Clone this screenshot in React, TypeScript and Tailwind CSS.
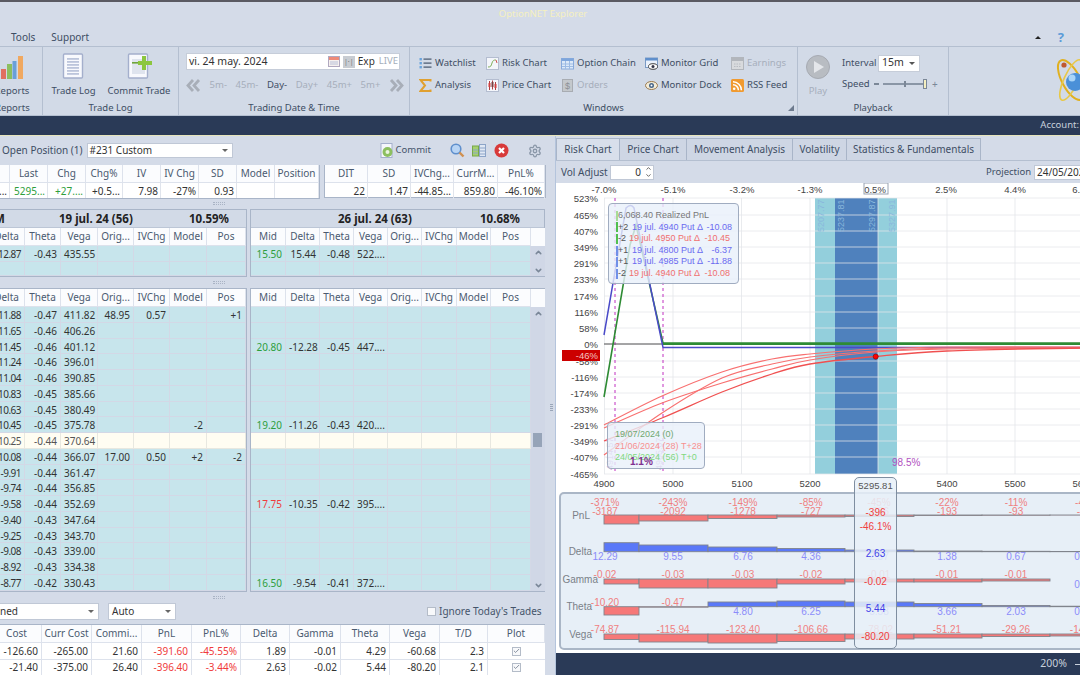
import React from "react";
import { Settings, ChevronUp, ChevronDown, Check } from "lucide-react";

const LEFT_COLS = "grid grid-cols-[36px_36px_37px_36px_36px_37px_39px]";
const RIGHT_COLS = "grid grid-cols-[35px_34px_34px_34px_34px_35px_34px_40px]";
const TOP1_COLS = "grid grid-cols-[38px_38px_38px_37px_38px_38px_38px_38px_44px]";
const TOP2_COLS = "grid grid-cols-[43px_43px_43px_44px_47px]";
const BOT_COLS = "grid grid-cols-[50px_50px_50px_50px_49px_49px_51px_49px_50px_48px_57px]";

const HL = ["Delta", "Theta", "Vega", "Orig...", "IVChg", "Model", "Pos"];
const HR = ["Mid", "Delta", "Theta", "Vega", "Orig...", "IVChg", "Model", "Pos"];

type R = { l: string[]; mid?: string; c?: string; r?: string[]; hi?: boolean };
const rows: R[] = [
  { l: ["-11.88", "-0.47", "411.82", "48.95", "0.57", "", "+1"] },
  { l: ["-11.65", "-0.46", "406.26"] },
  { l: ["-11.45", "-0.46", "401.12"], mid: "20.80", c: "g", r: ["-12.28", "-0.45", "447...."] },
  { l: ["-11.24", "-0.46", "396.01"] },
  { l: ["-11.04", "-0.46", "390.85"] },
  { l: ["-10.83", "-0.45", "385.66"] },
  { l: ["-10.63", "-0.45", "380.49"] },
  { l: ["-10.45", "-0.45", "375.78", "", "", "-2", ""], mid: "19.20", c: "g", r: ["-11.26", "-0.43", "420...."] },
  { l: ["-10.25", "-0.44", "370.64"], hi: true },
  { l: ["-10.08", "-0.44", "366.07", "17.00", "0.50", "+2", "-2"] },
  { l: ["-9.91", "-0.44", "361.47"] },
  { l: ["-9.74", "-0.44", "356.85"] },
  { l: ["-9.58", "-0.44", "352.69"], mid: "17.75", c: "r", r: ["-10.35", "-0.42", "395...."] },
  { l: ["-9.40", "-0.43", "347.64"] },
  { l: ["-9.25", "-0.43", "343.70"] },
  { l: ["-9.08", "-0.43", "339.00"] },
  { l: ["-8.92", "-0.43", "334.38"] },
  { l: ["-8.77", "-0.42", "330.43"], mid: "16.50", c: "g", r: ["-9.54", "-0.41", "372...."] },
];

function H({ t, last }: { t: string; last?: boolean }) {
  return (
    <div className={"h-full bg-[#fbfcfe] text-center text-[#4a5a70] leading-[17px] whitespace-nowrap overflow-hidden border-b border-[#dde2ec] " + (last ? "" : "border-r")}>
      {t}
    </div>
  );
}

function C({ t, color, hi, tight }: { t?: string; color?: string; hi?: boolean; tight?: boolean }) {
  const col = color === "g" ? "text-[#2e9e3c]" : color === "r" ? "text-[#f03c3c]" : hi ? "text-[#555]" : "text-[#333]";
  return (
    <div className={"border-r border-b px-[3px] text-right whitespace-nowrap overflow-hidden " + (tight ? "tracking-[-0.5px] " : "") + (hi ? "bg-[#fffdf2] border-[#e8e8e0] " : "bg-[#c7e5ec] border-[#d3d8e6] ") + col}>
      {t || ""}
    </div>
  );
}

function Grip() {
  return (
    <div className="flex h-[11px] items-center pl-[213px]">
      <div className="h-[3px] w-[12px] border-y border-dotted border-[#a9b3c4]" />
    </div>
  );
}

function Scrollbar({ thumb }: { thumb?: boolean }) {
  return (
    <div className="relative flex w-[14px] flex-col items-center justify-between self-stretch bg-[#d0d7e6] pt-[1px] text-[#7a8798]">
      <ChevronUp size={9} strokeWidth={4} className="mt-[1px]" />
      {thumb && <div className="absolute left-[2px] top-[126px] h-[14px] w-[9px] bg-[#96a4b8]" />}
      <ChevronDown size={9} strokeWidth={4} className="mb-[1px]" />
    </div>
  );
}

function Doc({ plus }: { plus?: boolean }) {
  return (
    <svg width="26" height="26" viewBox="0 0 26 26">
      <rect x="2.5" y="1" width="19" height="24" fill="#f8f9fd" stroke="#a4afcc" strokeWidth="1.4" rx="1" />
      {plus ? (
        <g>
          <rect x="6" y="6" width="13" height="15" fill="#dfe4ee" />
          <rect x="6" y="9" width="10" height="1.6" fill="#6fa53c" />
          <path d="M18 3v14M12 10h14" stroke="#8cc63f" strokeWidth="4" />
        </g>
      ) : (
        <g fill="#bcc5db">
          {[5, 8, 11, 14, 17, 20].map((y) => (
            <rect key={y} x="6" y={y} width="12" height="1.8" />
          ))}
        </g>
      )}
    </svg>
  );
}

function Ico({ k }: { k: string }) {
  const p = { width: 13, height: 13, viewBox: "0 0 13 13", className: "shrink-0" };
  switch (k) {
    case "watch":
      return (
        <svg {...p}>
          {[2, 6, 10].map((y) => (
            <g key={y}>
              <rect x="0.5" y={y - 1} width="2.4" height="2.4" fill="#6aa3dc" />
              <rect x="4.5" y={y - 0.5} width="8" height="1.2" fill="#44546c" />
            </g>
          ))}
        </svg>
      );
    case "sigma":
      return (
        <svg {...p}>
          <path d="M11.5 2.5V1H1.5l4.5 5.5L1.5 12h10v-1.5" fill="none" stroke="#e0a030" strokeWidth="2" />
        </svg>
      );
    case "risk":
      return (
        <svg {...p}>
          <rect x="0.5" y="0.5" width="12" height="12" fill="#f4f6fb" stroke="#b4bdd0" />
          <path d="M2 10c3 0 3-1 4-4s2-3 4-3" fill="none" stroke="#7fae5a" />
          <path d="M10 3l1 3" stroke="#d05050" />
        </svg>
      );
    case "price":
      return (
        <svg {...p}>
          <rect x="0.5" y="0.5" width="12" height="12" fill="#f4f6fb" stroke="#b4bdd0" />
          <path d="M3.5 2v9M6.5 1.5v9M9.5 3v8" stroke="#b04040" />
          <rect x="2.5" y="4" width="2" height="4" fill="#d04040" />
          <rect x="5.5" y="3" width="2" height="5" fill="#7a4040" />
          <rect x="8.5" y="5" width="2" height="4" fill="#d04040" />
        </svg>
      );
    case "chain":
      return (
        <svg {...p}>
          <rect x="0.5" y="1.5" width="12" height="10.5" fill="#dce9f8" stroke="#88aadc" />
          <rect x="0.5" y="1.5" width="12" height="2.5" fill="#7ea6dc" />
          <path d="M4.5 4v8M8.5 4v8M1 7h11M1 9.5h11" stroke="#9dbbe4" />
        </svg>
      );
    case "mgrid":
      return (
        <svg {...p}>
          <rect x="0.5" y="1" width="12" height="9.5" fill="#eaf1fb" stroke="#7a9ac4" />
          <rect x="0.5" y="1" width="12" height="2.5" fill="#5f8fcc" />
          <ellipse cx="8" cy="9.5" rx="4.5" ry="2.8" fill="#fff" stroke="#444" />
          <circle cx="8" cy="9.5" r="1.5" fill="#334" />
        </svg>
      );
    case "mdock":
      return (
        <svg {...p}>
          <ellipse cx="6.5" cy="6.5" rx="6" ry="4" fill="#f3ecd8" stroke="#9a7a50" />
          <circle cx="6.5" cy="6.5" r="2.5" fill="#47668a" />
          <circle cx="6.5" cy="6.5" r="1" fill="#fff" />
        </svg>
      );
    case "earn":
      return (
        <svg {...p}>
          <rect x="0.5" y="0.5" width="12" height="12" fill="#d8dadd" stroke="#b2b6bc" />
          <rect x="1" y="1" width="11" height="3" fill="#b2b6bc" />
          <path d="M3 7h7M3 9.5h7" stroke="#b8bcc2" strokeDasharray="1.5 1" />
        </svg>
      );
    case "orders":
      return (
        <svg {...p}>
          <rect x="1.5" y="0.5" width="10" height="12" fill="#c4c8cc" stroke="#a8acb2" />
          <text x="6.5" y="10" textAnchor="middle" fontSize="9" fill="#8c9096" className="font-['Liberation_Sans',sans-serif]">$</text>
        </svg>
      );
    case "rss":
      return (
        <svg {...p}>
          <rect x="0" y="0" width="13" height="13" rx="1.5" fill="#f09a30" />
          <circle cx="3.2" cy="9.8" r="1.3" fill="#fff" />
          <path d="M2 5.8a5.4 5.4 0 0 1 5.4 5.4M2 2.8a8.4 8.4 0 0 1 8.4 8.4" fill="none" stroke="#fff" strokeWidth="1.5" />
        </svg>
      );
  }
  return null;
}

function WinItem({ k, t, off }: { k: string; t: string; off?: boolean }) {
  return (
    <div className={"flex h-[22px] items-center gap-[3px] whitespace-nowrap " + (off ? "text-[#a6aebb]" : "text-[#3e4e64]")}>
      <Ico k={k} />
      <span>{t}</span>
    </div>
  );
}

function GroupLabel({ t }: { t: string }) {
  return <div className="absolute bottom-0 left-0 right-0 text-center leading-[14px] text-[#3e4e64]">{t}</div>;
}

function Ribbon() {
  return (
    <div className="flex h-[70px] border-y border-[#b4bfd0] bg-[#d2dae7] text-[9.5px]">
      <div className="relative h-full w-[43px] shrink-0 overflow-hidden border-r border-[#b4bfd0]">
        <div className="-ml-[18px] flex w-[60px] flex-col items-center pt-[8px] text-[#3e4e64]">
          <svg width="24" height="24" viewBox="0 0 24 24">
            <rect x="1" y="14" width="5" height="10" fill="#e07060" />
            <rect x="7" y="9" width="5" height="15" fill="#8cbf60" />
            <rect x="12.5" y="6" width="4" height="18" fill="#6aa0d8" />
            <rect x="18" y="1" width="5" height="23" fill="#f0a860" />
          </svg>
          <span className="mt-[5px] leading-[14px]">Reports</span>
        </div>
        <div className="absolute bottom-0 -left-[5px] w-[60px] leading-[14px] text-[#3e4e64]">Reports</div>
      </div>

      <div className="relative h-full w-[136px] shrink-0 border-r border-[#b4bfd0]">
        <div className="flex gap-[10px] pl-[7px] pt-[6px] text-[#3e4e64]">
          <div className="flex w-[47px] flex-col items-center">
            <Doc />
            <span className="mt-[5px] leading-[14px] whitespace-nowrap">Trade Log</span>
          </div>
          <div className="flex w-[64px] flex-col items-center">
            <Doc plus />
            <span className="mt-[5px] leading-[14px] whitespace-nowrap">Commit Trade</span>
          </div>
        </div>
        <GroupLabel t="Trade Log" />
      </div>

      <div className="relative h-full w-[231px] shrink-0 border-r border-[#b4bfd0] pl-[7px] pt-[6px]">
        <div className="flex h-[17px] w-[214px] items-center border border-[#c6cdd9] bg-white pl-[2px] pr-[1px] text-[#333]">
          <span className="text-[10.5px]">vi. 24 may. 2024</span>
          <svg width="12" height="11" viewBox="0 0 12 11" className="ml-auto">
            <rect x="0.5" y="0.5" width="11" height="10" fill="#f6f0ee" stroke="#b0a8c0" />
            <rect x="1" y="1" width="10" height="3" fill="#ee8a78" />
            <path d="M2 6h8M2 8h8" stroke="#b8c0d8" />
          </svg>
          <div className="ml-[3px] flex h-[12px] w-[12px] items-center justify-center bg-[#c8ccd2] text-[7px] leading-none text-[#777]">|·|</div>
          <span className="ml-[2px] w-[19px] text-center text-[10px]">Exp</span>
          <span className="ml-[3px] text-[#a4aeba]">LIVE</span>
        </div>
        <div className="mt-[7px] flex h-[16px] w-[218px] items-center justify-between leading-[16px] text-[#a6aebb]">
          <svg width="15" height="13" viewBox="0 0 15 13">
            <path d="M7 1L2 6.5 7 12M13 1L8 6.5 13 12" fill="none" stroke="#a8aeb8" strokeWidth="2.8" />
          </svg>
          <span>5m-</span>
          <span>45m-</span>
          <span className="text-[#3e4e64]">Day-</span>
          <span>Day+</span>
          <span>45m+</span>
          <span>5m+</span>
          <svg width="15" height="13" viewBox="0 0 15 13">
            <path d="M2 1l5 5.5L2 12M8 1l5 5.5L8 12" fill="none" stroke="#a8aeb8" strokeWidth="2.8" />
          </svg>
        </div>
        <GroupLabel t="Trading Date & Time" />
      </div>

      <div className="relative h-full w-[388px] shrink-0 border-r border-[#b4bfd0]">
        <div className="grid grid-cols-[67px_75px_84px_86px_60px] pl-[9px] pt-[5px]">
          <WinItem k="watch" t="Watchlist" />
          <WinItem k="risk" t="Risk Chart" />
          <WinItem k="chain" t="Option Chain" />
          <WinItem k="mgrid" t="Monitor Grid" />
          <WinItem k="earn" t="Earnings" off />
          <WinItem k="sigma" t="Analysis" />
          <WinItem k="price" t="Price Chart" />
          <WinItem k="orders" t="Orders" off />
          <WinItem k="mdock" t="Monitor Dock" />
          <WinItem k="rss" t="RSS Feed" />
        </div>
        <GroupLabel t="Windows" />
        <svg width="6" height="6" viewBox="0 0 6 6" className="absolute bottom-[4px] right-[3px]">
          <path d="M6 0v6H0z" fill="#6d7a8e" />
        </svg>
      </div>

      <div className="relative flex h-full w-[151px] shrink-0 border-r border-[#b4bfd0] pl-[8px] pt-[8px] text-[#3e4e64]">
        <div className="flex w-[24px] flex-col items-center">
          <svg width="24" height="24" viewBox="0 0 24 24">
            <circle cx="12" cy="12" r="11.5" fill="#b8bcc2" stroke="#a6aab2" />
            <path d="M8 6v12l10-6z" fill="#e4e6ea" />
          </svg>
          <span className="mt-[5px] leading-[14px] text-[#a6aebb]">Play</span>
        </div>
        <div className="ml-[12px]">
          <div className="-mt-[1px] flex h-[18px] items-center">
            <span className="w-[36px]">Interval</span>
            <div className="relative flex h-[17px] w-[42px] items-center border border-[#c6cdd9] bg-white pl-[3px] text-[10.5px] text-[#333]">
              15m
              <span className="absolute right-[4px] top-[6px] h-0 w-0 border-x-[3px] border-t-[3px] border-x-transparent border-t-[#555]" />
            </div>
          </div>
          <div className="mt-[4px] flex h-[16px] items-center">
            <span className="w-[32px]">Speed</span>
            <span className="h-[2px] w-[5px] bg-[#7b8797]" />
            <div className="relative ml-[4px] h-[2px] w-[41px] bg-[#8a96a6]">
              <span className="absolute left-[21px] -top-[2px] h-[6px] w-[2px] bg-[#7b8797]" />
              <span className="absolute -right-[3px] -top-[4px] h-[10px] w-[4px] border border-[#7b8797] bg-[#f5efc0]" />
            </div>
            <span className="ml-[8px] text-[10px] leading-none text-[#7b8797]">+</span>
          </div>
        </div>
        <GroupLabel t="Playback" />
      </div>

      <div className="relative flex h-full flex-1 justify-end overflow-hidden pt-[10px]">
        <svg width="31" height="46" viewBox="0 0 31 46" className="shrink-0">
          <ellipse cx="22" cy="23" rx="9" ry="22" fill="none" stroke="#e0b020" strokeWidth="2" transform="rotate(-28 22 23)" />
          <ellipse cx="22" cy="23" rx="7" ry="22" fill="none" stroke="#e8c848" strokeWidth="1.6" transform="rotate(25 22 23)" />
          <circle cx="26" cy="25" r="9" fill="#4a90d8" />
          <circle cx="23" cy="21" r="3.5" fill="#a8d4f8" />
          <circle cx="15" cy="8" r="2.6" fill="#c05a30" />
        </svg>
      </div>
    </div>
  );
}

function ToolIcons() {
  return (
    <>
      <div className="flex items-center gap-[1px] text-[9.5px] text-[#44546a]">
        <svg width="15" height="15" viewBox="0 0 15 15">
          <rect x="1" y="0.5" width="11" height="14" fill="#f4f6fb" stroke="#a4afcc" />
          <circle cx="7.5" cy="9" r="5" fill="#8cbf60" />
          <circle cx="7.5" cy="9" r="2" fill="#eaf4e0" />
        </svg>
        <span>Commit</span>
      </div>
      <svg width="15" height="15" viewBox="0 0 15 15" className="ml-[19px]">
        <circle cx="6" cy="6" r="4.8" fill="#b8d4f4" stroke="#5f8fcc" strokeWidth="1.6" />
        <path d="M9.5 9.5l4 4" stroke="#d09050" strokeWidth="2.4" />
      </svg>
      <svg width="14" height="13" viewBox="0 0 14 13" className="ml-[7px]">
        <rect x="0.5" y="2" width="6" height="10" fill="#a4d070" stroke="#78a848" />
        <rect x="7.5" y="0.5" width="6" height="12" fill="#e0e8f4" stroke="#8ca4c8" />
        <path d="M8 4h5M8 7h5M8 10h5M1 6h5M1 9h5" stroke="#8ca4c8" />
      </svg>
      <svg width="15" height="15" viewBox="0 0 15 15" className="ml-[8px]">
        <circle cx="7.5" cy="7.5" r="7" fill="#d83a3a" />
        <path d="M5 5l5 5M10 5l-5 5" stroke="#fff" strokeWidth="2.2" />
      </svg>
      <Settings size={14} strokeWidth={2.2} className="ml-[19px] text-[#8a97a8]" />
    </>
  );
}

function Left() {
  return (
    <div className="flex w-[548px] shrink-0 flex-col overflow-hidden">
      <div className="flex h-[29px] items-center">
        <span className="pl-[2px] text-[#3e4e64] whitespace-nowrap">Open Position (1)</span>
        <div className="relative ml-[4px] flex h-[15px] w-[146px] items-center border border-[#c0c8d6] bg-white pl-[2px] text-[#333]">
          #231 Custom
          <span className="absolute right-[4px] top-[5px] h-0 w-0 border-x-[3px] border-t-[3px] border-x-transparent border-t-[#666]" />
        </div>
        <div className="ml-[147px] flex items-center">
          <ToolIcons />
        </div>
      </div>

      <div className="flex h-[33px] items-start gap-[4px]">
        <div className="-ml-[28px] border-r border-b border-[#a9b5c8]">
          <div className={TOP1_COLS + " h-[18px]"}>
            {["", "Last", "Chg", "Chg%", "IV", "IV Chg", "SD", "Model", "Position"].map((t, i) => (
              <H key={i} t={t} />
            ))}
          </div>
          <div className={TOP1_COLS + " h-[15px] bg-white leading-[16px] text-[#333]"}>
            {[["...", ""], ["5295...", "text-[#2e9e3c]"], ["+27....", "text-[#2e9e3c]"], ["+0.5...", ""], ["7.98", ""], ["-27%", ""], ["0.93", ""], ["", ""], ["", ""]].map(([t, c], i) => (
              <div key={i} className={"border-r border-[#e0e4ec] px-[2px] text-right whitespace-nowrap overflow-hidden " + c}>{t}</div>
            ))}
          </div>
        </div>
        <div className="border border-t-0 border-[#a9b5c8]">
          <div className={TOP2_COLS + " h-[18px]"}>
            {["DIT", "SD", "IVChg...", "CurrM...", "PnL%"].map((t, i) => (
              <H key={i} t={t} />
            ))}
          </div>
          <div className={TOP2_COLS + " h-[14px] bg-white leading-[16px] text-[#333]"}>
            {["22", "1.47", "-44.85...", "859.80", "-46.10%"].map((t, i) => (
              <div key={i} className="border-r border-[#e0e4ec] px-[2px] text-right whitespace-nowrap">{t}</div>
            ))}
          </div>
        </div>
      </div>

      <Grip />

      <div className="flex h-[68px]">
        <div className="-ml-[11px] w-[258px] shrink-0 border border-l-0 border-[#a9b5c8]">
          <div className="flex h-[18px] items-center border-b border-[#bcc6d6] bg-[#d2dae7] text-[11.5px] font-bold text-[#222] whitespace-nowrap">
            <span className="w-[20px] overflow-hidden pl-[5px]">M</span>
            <span className="ml-[50px] w-[130px]">19 jul. 24 (56)</span>
            <span>10.59%</span>
          </div>
          <div className={LEFT_COLS + " h-[18px]"}>
            {HL.map((t) => (
              <H key={t} t={t} />
            ))}
          </div>
          <div className={LEFT_COLS + " h-[16px] leading-[16px]"}>
            {["-12.87", "-0.43", "435.55", "", "", "", ""].map((t, i) => (
              <C key={i} t={t} tight={i === 0} />
            ))}
          </div>
          <div className={LEFT_COLS + " h-[14px]"}>
            {[0, 1, 2, 3, 4, 5, 6].map((i) => (
              <C key={i} />
            ))}
          </div>
        </div>
        <div className="ml-[3px] w-[295px] shrink-0 border border-[#a9b5c8]">
          <div className="flex h-[18px] items-center border-b border-[#bcc6d6] bg-[#d2dae7] text-[11.5px] font-bold text-[#222] whitespace-nowrap">
            <span className="ml-[87px] w-[142px]">26 jul. 24 (63)</span>
            <span>10.68%</span>
          </div>
          <div className="flex h-[48px]">
            <div>
              <div className={RIGHT_COLS + " h-[18px]"}>
                {HR.map((t) => (
                  <H key={t} t={t} />
                ))}
              </div>
              <div className={RIGHT_COLS + " h-[16px] leading-[16px]"}>
                {["15.50", "15.44", "-0.48", "522....", "", "", "", ""].map((t, i) => (
                  <C key={i} t={t} color={i === 0 ? "g" : undefined} />
                ))}
              </div>
              <div className={RIGHT_COLS + " h-[14px]"}>
                {[0, 1, 2, 3, 4, 5, 6, 7].map((i) => (
                  <C key={i} />
                ))}
              </div>
            </div>
            <div className="flex flex-col">
              <div className="h-[18px] w-[14px] bg-[#fbfcfe]" />
              <div className="flex flex-1">
                <Scrollbar />
              </div>
            </div>
          </div>
        </div>
      </div>

      <Grip />

      <div className="flex h-[304px]">
        <div className="-ml-[11px] w-[258px] shrink-0 border border-l-0 border-[#a9b5c8]">
          <div className={LEFT_COLS + " h-[18px]"}>
            {HL.map((t) => (
              <H key={t} t={t} />
            ))}
          </div>
          {rows.map((r, i) => (
            <div key={i} className={LEFT_COLS + " h-[15.75px] leading-[16px]"}>
              {[0, 1, 2, 3, 4, 5, 6].map((j) => (
                <C key={j} t={r.l[j]} hi={r.hi} tight={j === 0} />
              ))}
            </div>
          ))}
        </div>
        <div className="ml-[3px] flex w-[295px] shrink-0 border border-[#a9b5c8]">
          <div>
            <div className={RIGHT_COLS + " h-[18px]"}>
              {HR.map((t) => (
                <H key={t} t={t} />
              ))}
            </div>
            {rows.map((r, i) => (
              <div key={i} className={RIGHT_COLS + " h-[15.75px] leading-[16px]"}>
                {[0, 1, 2, 3, 4, 5, 6, 7].map((j) => (
                  <C key={j} hi={r.hi} t={j === 0 ? r.mid : r.r ? r.r[j - 1] : ""} color={j === 0 ? r.c : undefined} />
                ))}
              </div>
            ))}
          </div>
          <div className="flex flex-col">
            <div className="h-[18px] w-[14px] bg-[#fbfcfe]" />
            <div className="flex flex-1">
              <Scrollbar thumb />
            </div>
          </div>
        </div>
      </div>

      <Grip />

      <div className="flex h-[21px] items-start text-[#333]">
        <div className="relative -ml-[40px] flex h-[17px] w-[139px] items-center justify-end border border-[#c0c8d6] bg-white pr-[80px]">
          Combined
          <span className="absolute right-[4px] top-[6px] h-0 w-0 border-x-[3px] border-t-[3px] border-x-transparent border-t-[#666]" />
        </div>
        <div className="relative ml-[9px] flex h-[17px] w-[68px] items-center border border-[#c0c8d6] bg-white pl-[3px]">
          Auto
          <span className="absolute right-[4px] top-[6px] h-0 w-0 border-x-[3px] border-t-[3px] border-x-transparent border-t-[#666]" />
        </div>
        <div className="ml-[251px] flex h-[17px] items-center whitespace-nowrap text-[#44546a]">
          <span className="h-[9px] w-[9px] border border-[#b4bcc8] bg-[#f8f9fb]" />
          <span className="ml-[3px]">Ignore Today's Trades</span>
        </div>
      </div>

      <div className="-ml-[8px] w-[553px] border-t border-[#a9b5c8]">
        <div className={BOT_COLS + " h-[18px]"}>
          {["Cost", "Curr Cost", "Commi...", "PnL", "PnL%", "Delta", "Gamma", "Theta", "Vega", "T/D", "Plot"].map((t) => (
            <H key={t} t={t} />
          ))}
        </div>
        {[
          ["-126.60", "-265.00", "21.60", "-391.60", "-45.55%", "1.89", "-0.01", "4.29", "-60.68", "2.3"],
          ["-21.40", "-375.00", "26.40", "-396.40", "-3.44%", "2.63", "-0.02", "5.44", "-80.20", "2.1"],
        ].map((r, i) => (
          <div key={i} className={BOT_COLS + " h-[16px] bg-white leading-[16px] text-[#333]"}>
            {r.map((t, j) => (
              <div key={j} className={"border-r border-b border-[#dde2ec] px-[3px] text-right whitespace-nowrap " + (j === 3 || j === 4 ? "text-[#f03c3c]" : "")}>
                {t}
              </div>
            ))}
            <div className="flex items-center justify-center border-b border-[#dde2ec]">
              <span className="flex h-[9px] w-[9px] items-center justify-center border border-[#b4bcc8] bg-[#f8f9fb] text-[#7a8494]">
                <Check size={8} strokeWidth={3} />
              </span>
            </div>
          </div>
        ))}
      </div>
    </div>
  );
}

function smooth(pts: number[][]) {
  let d = `M${pts[0][0]} ${pts[0][1]}`;
  for (let i = 0; i < pts.length - 1; i++) {
    const p0 = pts[i - 1] || pts[i];
    const p1 = pts[i];
    const p2 = pts[i + 1];
    const p3 = pts[i + 2] || p2;
    d += ` C${p1[0] + (p2[0] - p0[0]) / 6} ${p1[1] + (p2[1] - p0[1]) / 6} ${p2[0] - (p3[0] - p1[0]) / 6} ${p2[1] - (p3[1] - p1[1]) / 6} ${p2[0]} ${p2[1]}`;
  }
  return d;
}

const GY = [198, 215, 231, 247, 263, 279, 296, 312, 328, 344, 361, 377, 393, 409, 425, 441, 457, 474];
const YL = ["523%", "465%", "407%", "349%", "291%", "233%", "174%", "116%", "58%", "0%", "-58%", "-116%", "-174%", "-233%", "-291%", "-349%", "-407%", "-465%"];
const GX = [604.5, 673, 741.5, 810, 878, 947, 1015, 1083];

function Chart() {
  return (
    <svg width="524" height="309" viewBox="556 183 524 309" className="block font-['Liberation_Sans',sans-serif]">
      <rect x="815" y="198" width="82" height="276" fill="#93cfdc" />
      <rect x="835" y="198" width="43" height="276" fill="#4f81bd" />
      {GY.map((y) => (
        <line key={y} x1="604" x2="1080" y1={y} y2={y} stroke="#e4e6ea" strokeOpacity="0.75" strokeWidth="1" />
      ))}
      {GX.map((x) => (
        <line key={x} x1={x} x2={x} y1="198" y2="474" stroke="#e4e6ea" strokeOpacity="0.8" strokeWidth="1" />
      ))}
      {YL.map((t, i) => (
        <text key={t} x="598" y={GY[i] + 3.5} textAnchor="end" fontSize="9.5" fill="#444">{t}</text>
      ))}
      {["-7.0%", "-5.1%", "-3.2%", "-1.3%", "0.5%", "2.5%", "4.4%", "6.3%"].map((t, i) => (
        <text key={t} x={[604, 673, 742, 810, 875, 946, 1015, 1083][i]} y="193" textAnchor="middle" fontSize="9.5" fill="#444">{t}</text>
      ))}
      <rect x="864" y="183" width="24" height="11" fill="none" stroke="#98a2b2" />
      {[["4900", 604], ["5000", 673], ["5100", 742], ["5200", 810], ["5400", 947], ["5500", 1015], ["5600", 1083]].map(([t, x]) => (
        <text key={t as string} x={x as number} y="487" textAnchor="middle" fontSize="9.5" fill="#444">{t}</text>
      ))}
      {[["5207.77", 822], ["5237.81", 842], ["5297.87", 873], ["5327.91", 893]].map(([t, x]) => (
        <text key={t as string} x={x as number} y="232" fontSize="9" fill="#8ab8dc" transform={`rotate(-90 ${x} 232)`} dominantBaseline="middle">{t}</text>
      ))}
      <line x1="615" x2="615" y1="198" y2="474" stroke="#c030c0" strokeDasharray="3 3" />
      <line x1="663" x2="663" y1="198" y2="474" stroke="#c030c0" strokeDasharray="3 3" />
      <line x1="604" x2="1080" y1="344" y2="344" stroke="#555" />
      <path d="M604 397L630 245 636 225 663 343H1080" fill="none" stroke="#2e8b34" strokeWidth="1.6" />
      <line x1="663" x2="1080" y1="344" y2="344" stroke="#2e8b34" strokeWidth="2" />
      <path d="M604 335L626 208Q631 203 634 208L663 347.5H1080" fill="none" stroke="#4a4ac8" strokeWidth="1.5" />
      {[
        [[604, 425], [662, 396], [722, 372], [772, 359], [810, 354], [875, 349], [950, 347], [1080, 347]],
        [[604, 428], [662, 403], [722, 383], [772, 369], [810, 360], [875, 352], [950, 349], [1080, 348]],
        [[604, 455], [662, 413], [722, 378], [772, 364], [810, 357], [875, 351], [950, 348], [1080, 348]],
      ].map((p, i) => (
        <path key={i} d={smooth(p)} fill="none" stroke="#f87070" strokeWidth="1.2" />
      ))}
      <path d={smooth([[604, 441], [662, 418], [722, 392], [772, 374], [810, 364], [875, 356.5], [947, 351], [1080, 348]])} fill="none" stroke="#f05050" strokeWidth="1.3" />
      <circle cx="875.7" cy="356.6" r="2.6" fill="#f00" stroke="#601010" strokeWidth="0.6" />
      <text x="611" y="470" fontSize="9" fill="#c090d0" transform="rotate(-90 611 470)" dominantBaseline="middle">4914.57</text>
      <text x="660" y="470" fontSize="9" fill="#c090d0" transform="rotate(-90 660 470)" dominantBaseline="middle">4985.07</text>
      <text x="892" y="466" fontSize="10" fill="#b050c0">98.5%</text>
      <rect x="562" y="350" width="38" height="11" fill="#cc0000" />
      <text x="598" y="359" textAnchor="end" fontSize="9.5" fill="#f4c0c0">-46%</text>
    </svg>
  );
}

const BX = [604, 639, 708, 777, 845, 914, 982, 1050, 1085];
const XC = [605, 673, 743, 811, 879, 947, 1016, 1084];
const RED = "#f08080";
const BLUE = "#8c8cfa";
const STATS: { base: number; ends: number[]; top: string[]; bottom?: string[]; topY: number; botY?: number }[] = [
  {
    base: 515,
    ends: [524, 521, 518.5, 517, 516.5, 515.5, 515.3, 515.1],
    top: ["-3187", "-2092", "-1278", "-727", "-386", "-193", "-93", "-41"],
    topY: 515,
  },
  {
    base: 551.7,
    ends: [542.7, 545, 547, 548.5, 550, 551, 551.3, 551.5],
    top: [],
    bottom: ["12.29", "9.55", "6.76", "4.36", "2.57", "1.38", "0.67", "0.31"],
    topY: 0,
    botY: 560,
  },
  {
    base: 579,
    ends: [584, 588, 588, 584, 582, 582, 581, 579],
    top: ["-0.02", "-0.03", "-0.03", "-0.02", "-0.01", "-0.01", "-0.01"],
    bottom: ["", "", "", "", "", "", "", "0.00"],
    topY: 578,
    botY: 588,
  },
  {
    base: 606.7,
    ends: [615, 607.2, 602, 601, 602, 603.5, 605.5, 606.2],
    top: ["-10.20", "-0.47"],
    bottom: ["", "", "4.80", "6.25", "5.58", "3.66", "2.03", "0.92"],
    topY: 606,
    botY: 615,
  },
  {
    base: 634,
    ends: [639.5, 642, 643, 641.5, 639, 638, 636.5, 636],
    top: ["-74.87", "-115.94", "-123.40", "-106.66", "-78.02", "-51.21", "-29.26", "-14.92"],
    topY: 633,
  },
];

function StatsPanel() {
  return (
    <svg width="531" height="154" viewBox="561 494 531 154" className="block font-['Liberation_Sans',sans-serif]">
      {["-371%", "-243%", "-149%", "-85%", "-45%", "-22%", "-11%", "-4%"].map((t, i) => (
        <text key={t} x={XC[i]} y="505.5" textAnchor="middle" fontSize="10" fill={RED}>{t}</text>
      ))}
      {[["PnL", 590, 518.5], ["Delta", 592, 555], ["Gamma", 598, 583], ["Theta", 592, 610], ["Vega", 592, 638]].map(([t, x, y]) => (
        <text key={t as string} x={x as number} y={y as number} textAnchor="end" fontSize="10" fill="#7a7f88">{t}</text>
      ))}
      {STATS.map((s, i) => (
        <g key={i}>
          {s.ends.map((e, j) => (
            <rect
              key={j}
              x={BX[j]}
              width={BX[j + 1] - BX[j]}
              y={Math.min(e, s.base)}
              height={Math.abs(e - s.base)}
              fill={e > s.base ? "#f67878" : "#5a78f8"}
              stroke="#80848c"
              strokeWidth="0.9"
            />
          ))}
          {s.top.map((t, j) => (
            <text key={j} x={XC[j]} y={s.topY} textAnchor="middle" fontSize="10" fill={RED}>{t}</text>
          ))}
          {(s.bottom || []).map((t, j) => (
            <text key={j} x={XC[j]} y={s.botY} textAnchor="middle" fontSize="10" fill={BLUE}>{t}</text>
          ))}
        </g>
      ))}
    </svg>
  );
}

function TipRow({ pre, txt, val, blue, bar }: { pre: string; txt: string; val: string; blue?: boolean; bar: string }) {
  return (
    <div className="relative flex h-[11.6px] items-center whitespace-nowrap">
      <span className={"absolute left-[7px] h-[10px] w-[2px] " + bar} />
      <span className="ml-[9px] w-[13px] text-[#555]">{pre}</span>
      <span className={blue ? "ml-[1px] text-[#6a6af0]" : "-ml-[2px] text-[#f07070]"}>{txt}</span>
      <span className={"ml-auto " + (blue ? "mr-[6px] text-[#6a6af0]" : "mr-[8px] text-[#f07070]")}>{val}</span>
    </div>
  );
}

function Tab({ t, w, first }: { t: string; w: string; first?: boolean }) {
  return (
    <div className={"flex h-[22px] shrink-0 items-center justify-center whitespace-nowrap border-t border-r border-[#a9b5c8] " + w + (first ? " border-l bg-[#d8dfeb]" : " bg-[#ced6e4]")}>
      {t}
    </div>
  );
}

function Right() {
  return (
    <div className="relative flex w-[525px] shrink-0 flex-col overflow-hidden border-l border-[#b4c4dc]">
      <div className="flex h-[25px] items-end border-b border-[#b4bfd0] text-[#3e4e64]">
        <Tab t="Risk Chart" w="w-[64px]" first />
        <Tab t="Price Chart" w="w-[67px]" />
        <Tab t="Movement Analysis" w="w-[106px]" />
        <Tab t="Volatility" w="w-[54px]" />
        <Tab t="Statistics & Fundamentals" w="w-[134px]" />
      </div>
      <div className="flex h-[22px] items-center text-[#3e4e64] whitespace-nowrap">
        <span className="ml-[5px] w-[49px] shrink-0">Vol Adjust</span>
        <div className="flex h-[15px] w-[44px] shrink-0 items-center justify-end border border-[#c0c8d6] bg-white text-[#333]">
          0
          <span className="ml-[4px] mr-[1px] flex flex-col text-[#555]">
            <ChevronUp size={7} strokeWidth={3} />
            <ChevronDown size={7} strokeWidth={3} />
          </span>
        </div>
        <span className="ml-[332px] w-[43px] shrink-0 text-[9.5px]">Projection</span>
        <div className="ml-[5px] flex h-[15px] w-[60px] shrink-0 items-center border border-[#c0c8d6] bg-white pl-[2px] text-[#333]">24/05/2024</div>
      </div>

      <div className="relative h-[309px] bg-white">
        <Chart />
        <div className="absolute left-[52px] top-[20px] h-[81px] w-[131px] rounded-[4px] border border-[#a0acc0] bg-[#e8f0fa]/80 pt-[6px] font-['Liberation_Sans',sans-serif] text-[9px] leading-[11.6px]">
          <div className="relative flex h-[11.6px] items-center whitespace-nowrap text-[#777]">
            <span className="absolute left-[7px] h-[10px] w-[2px] bg-[#a8dc98]" />
            <span className="ml-[9px]">6,068.40 Realized PnL</span>
          </div>
          <TipRow pre="+2" txt="19 jul. 4940 Put Δ" val="-10.08" blue bar="bg-[#50c050]" />
          <TipRow pre="-2" txt="19 jul. 4950 Put Δ" val="-10.45" bar="bg-[#50c050]" />
          <TipRow pre="+1" txt="19 jul. 4800 Put Δ" val="-6.37" blue bar="bg-[#7090e8]" />
          <TipRow pre="+1" txt="19 jul. 4985 Put Δ" val="-11.88" blue bar="bg-[#7090e8]" />
          <TipRow pre="-2" txt="19 jul. 4940 Put Δ" val="-10.08" bar="bg-[#7090e8]" />
        </div>
        <div className="absolute left-[51px] top-[239px] h-[47px] w-[98px] rounded-[4px] border border-[#a0acc0] bg-[#e8f0fa]/80 pl-[7px] pt-[6px] font-['Liberation_Sans',sans-serif] text-[9px] leading-[11.6px] whitespace-nowrap">
          <div className="text-[#70a870]">19/07/2024 (0)</div>
          <div className="text-[#f89090]">21/06/2024 (28) T+28</div>
          <div className="text-[#80d880]">24/05/2024 (56) T+0</div>
        </div>
        <div className="absolute left-[74px] top-[273px] font-['Liberation_Sans',sans-serif] text-[10px] font-bold leading-[12px] text-[#803090]">1.1%</div>
      </div>

      <div className="h-[161px] bg-white">
        <div className="ml-[3px] -mr-[10px] h-[158px] overflow-hidden rounded-[5px] border-2 border-[#aab6c6] bg-[#e7eff7]">
          <StatsPanel />
        </div>
      </div>

      <div className="flex h-[22px] items-center justify-end bg-[#2a3a57] text-[#c8d0dc]">
        <span className="text-[10.5px]">200%</span>
        <span className="ml-[8px] h-[1px] w-[5px] bg-[#c8d0dc]" />
      </div>

      <div className="absolute left-[298px] top-[341px] h-[172px] w-[43px] rounded-[5px] border border-[#7f8ea0] bg-[#e8f0f8]/85 text-center font-['Liberation_Sans',sans-serif] text-[10px] leading-[14px] text-[#f04040]">
        <div className="h-[16px] text-[9.5px] leading-[16px] text-[#555]">5295.81</div>
        <div className="mt-[12px]">-396</div>
        <div>-46.1%</div>
        <div className="mt-[13px] text-[#4040e8]">2.63</div>
        <div className="mt-[14px]">-0.02</div>
        <div className="mt-[13px] text-[#4040e8]">5.44</div>
        <div className="mt-[14px]">-80.20</div>
      </div>
    </div>
  );
}

export default function App() {
  return (
    <div className="h-[675px] w-[1080px] overflow-hidden bg-[#d4dbe8] font-['Noto_Sans',sans-serif] text-[10px]">
      <div className="h-[2px] bg-[#5a5a62]" />
      <div className="h-[26px] pl-[6px] pt-[5px] text-center text-[9.5px] leading-[14px] text-[#f4f0c0]">OptionNET Explorer</div>
      <div className="flex h-[18px] items-center pl-[11px] text-[#3e4e64]">
        <span>Tools</span>
        <span className="ml-[16px]">Support</span>
        <span className="ml-auto h-0 w-0 border-x-[3px] border-b-[3px] border-x-transparent border-b-[#222]" />
        <span className="ml-[17px] mr-[16px] text-[13px] font-bold leading-none text-[#5b9bd8]">?</span>
      </div>
      <Ribbon />
      <div className="flex h-[19px] items-center justify-end bg-[#2a3a57] pr-[1px] text-[9.5px] text-[#c8d0dc] whitespace-nowrap">
        <span>Account:</span>
      </div>
      <div className="flex h-[540px] border-t border-[#e6e4bc]">
        <Left />
        <div className="flex w-[7px] shrink-0 flex-col items-center justify-center gap-[1px] pt-[3px]">
          {[0, 1, 2, 3].map((i) => (
            <span key={i} className="h-[1px] w-[3px] bg-[#9aa6b8]" />
          ))}
        </div>
        <Right />
      </div>
    </div>
  );
}
